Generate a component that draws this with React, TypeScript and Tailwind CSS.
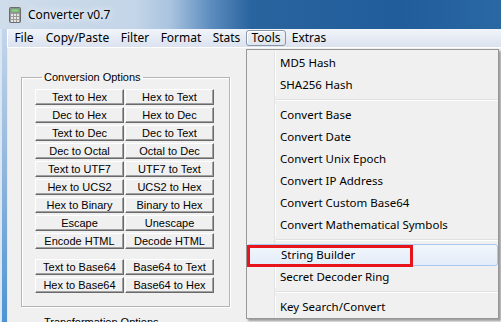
import React from 'react';

const menuBar = [
  { label: 'File', w: 'w-[32px]' },
  { label: 'Copy/Paste', w: 'w-[75px]' },
  { label: 'Filter', w: 'w-[40px]' },
  { label: 'Format', w: 'w-[52px]' },
  { label: 'Stats', w: 'w-[39px]' },
];

const convButtons: [string, string][] = [
  ['Text to Hex', 'Hex to Text'],
  ['Dec to Hex', 'Hex to Dec'],
  ['Text to Dec', 'Dec to Text'],
  ['Dec to Octal', 'Octal to Dec'],
  ['Text to UTF7', 'UTF7 to Text'],
  ['Hex to UCS2', 'UCS2 to Hex'],
  ['Hex to Binary', 'Binary to Hex'],
  ['Escape', 'Unescape'],
  ['Encode HTML', 'Decode HTML'],
];

const base64Buttons: [string, string][] = [
  ['Text to Base64', 'Base64 to Text'],
  ['Hex to Base64', 'Base64 to Hex'],
];

type MenuEntry = { label: string; active?: boolean } | 'sep';

const toolsMenu: MenuEntry[] = [
  { label: 'MD5 Hash' },
  { label: 'SHA256 Hash' },
  'sep',
  { label: 'Convert Base' },
  { label: 'Convert Date' },
  { label: 'Convert Unix Epoch' },
  { label: 'Convert IP Address' },
  { label: 'Convert Custom Base64' },
  { label: 'Convert Mathematical Symbols' },
  'sep',
  { label: 'String Builder', active: true },
  { label: 'Secret Decoder Ring' },
  'sep',
  { label: 'Key Search/Convert' },
];

const CalcIcon = () => (
  <svg width="12" height="16" viewBox="0 0 12 16">
    <rect x="0.5" y="0.5" width="11" height="15" rx="1" fill="#9a9a9a" stroke="#6b6b6b" />
    <rect x="2" y="2" width="8" height="3" fill="#8fd08a" stroke="#4f8f4a" strokeWidth="0.5" />
    {[0, 1, 2].map((r) =>
      [0, 1, 2].map((c) => (
        <rect key={`${r}-${c}`} x={2 + c * 3} y={7 + r * 3} width="2" height="2" fill="#e6e6e6" />
      ))
    )}
  </svg>
);

const WinButton = ({ label }: { label: string }) => (
  <div className="h-[16px] flex items-center justify-center bg-[#f0f0f0] border-t border-l border-t-white border-l-white border-r border-b border-r-[#696969] border-b-[#696969] shadow-[inset_-1px_-1px_0_#a0a0a0] text-[11px] leading-none text-black">
    {label}
  </div>
);

const ButtonGrid = ({ rows }: { rows: [string, string][] }) => (
  <div className="grid grid-cols-[89px_89px] gap-x-[1px] gap-y-[2px]">
    {rows.map(([a, b]) => (
      <React.Fragment key={a}>
        <WinButton label={a} />
        <WinButton label={b} />
      </React.Fragment>
    ))}
  </div>
);

export default function App() {
  return (
    <div className="relative w-[501px] h-[322px] overflow-hidden bg-[#f0f0f0] font-['Noto_Sans',sans-serif]">
      {/* title bar */}
      <div className="h-[29px] flex items-center pl-[9px] bg-[linear-gradient(to_right,#cfdcea_0%,#c3d5e8_27%,#a9c3df_34%,#5d8dbf_42%,#2a649f_50%,#205d9a_80%,#2a68a4_100%)]">
        <CalcIcon />
        <span className="ml-[7px] text-[12px] text-black [text-shadow:0_0_6px_#fff,0_0_10px_#fff]">
          Converter v0.7
        </span>
      </div>

      <div className="flex h-[293px]">
        {/* left frame */}
        <div className="w-[7px] bg-[linear-gradient(to_bottom,#c4d6ea,#8fb5dc_50%,#4d93d2)] border-l-[2px] border-l-[#d9e6f3]" />

        <div className="flex-1 flex flex-col">
          {/* menu bar */}
          <div className="h-[20px] flex items-center bg-[linear-gradient(to_bottom,#f1f4f9,#dbe2ef)] border-l border-l-white text-[12px] text-black">
            {menuBar.map((m) => (
              <div key={m.label} className={`${m.w} h-full flex items-center justify-center`}>
                {m.label}
              </div>
            ))}
            <div className="w-[40px] h-[16px] flex items-center justify-center rounded-[3px] border border-[#8a97a9] bg-[linear-gradient(to_bottom,#eef1f6,#dfe5ee)] shadow-[inset_1px_1px_0_#ffffff]">
              Tools
            </div>
            <div className="w-[46px] h-full flex items-center justify-center">Extras</div>
          </div>

          {/* client area */}
          <div className="flex-1 border-t border-t-white border-l border-l-[#e8e8e8] bg-[#f0f0f0] pl-[13px] pt-[23px] font-['Liberation_Sans',Arial,sans-serif] text-black">
            <fieldset className="w-[209px] h-[236px] border border-[#b4b4b4] shadow-[inset_1px_1px_0_#fff,1px_1px_0_#fff] pl-[13px] pt-[5px]">
              <legend className="ml-[7px] px-[2px] text-[11px] leading-[13px]">Conversion Options</legend>
              <ButtonGrid rows={convButtons} />
              <div className="mt-[10px]">
                <ButtonGrid rows={base64Buttons} />
              </div>
            </fieldset>
            <fieldset className="mt-[9px] w-[209px] h-[40px] border border-[#b4b4b4] pl-[13px]">
              <legend className="ml-[7px] px-[2px] text-[11px] leading-[13px]">Transformation Options</legend>
            </fieldset>
          </div>
        </div>
      </div>

      {/* Tools dropdown */}
      <div className="absolute left-[246px] top-[49px] w-[253px] h-[270px] border border-[#979797] bg-[#f0f0f0] shadow-[2px_2px_2px_rgba(0,0,0,0.35)] pt-[2px] text-[11.5px] text-black">
        {toolsMenu.map((e, i) =>
          e === 'sep' ? (
            <div key={`sep-${i}`} className="h-[8px] flex">
              <div className="w-[28px] border-r border-r-[#e2e3e3]" />
              <div className="flex-1 ml-[1px] pt-[3px]">
                <div className="h-[2px] border-t border-t-[#e0e0e0] border-b border-b-white" />
              </div>
            </div>
          ) : e.active ? (
            <div
              key={e.label}
              className="h-[22px] flex items-center pl-[33px] rounded-[3px] border border-[#a8c8ef] bg-[linear-gradient(to_bottom,#f3f7fc,#e3ecf8)]"
            >
              {e.label}
            </div>
          ) : (
            <div key={e.label} className="h-[22px] flex items-center">
              <div className="w-[28px] h-full border-r border-r-[#e2e3e3] shadow-[1px_0_0_#fff]" />
              <span className="pl-[5px]">{e.label}</span>
            </div>
          )
        )}
      </div>

      {/* annotation box */}
      <div className="absolute left-[247px] top-[245px] w-[166px] h-[22px] border-[3px] border-[#e8141b]" />
    </div>
  );
}
